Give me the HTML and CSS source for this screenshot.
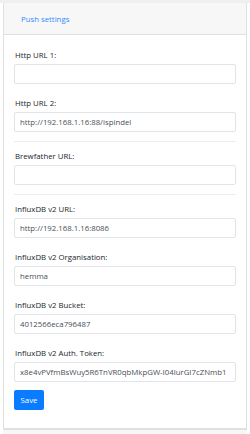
FILE: index.html
```
<!DOCTYPE html>
<html lang="en">
    <head>
        <link rel="stylesheet" href="styles.css">
        <meta charset="UTF-8">
        <title>Push settings</title>
    </head>
    <body>
        <div class="topbar"></div>
        <div class="card">
            <div class="card-header">
                <a class="tab" href="#">Push settings</a>
            </div>
            <form class="card-body">
                <div class="group">
                    <label for="http1">Http URL 1:</label>
                    <input type="text" id="http1" value="">
                </div>
                <div class="group">
                    <label for="http2">Http URL 2:</label>
                    <input type="text" id="http2" value="http://192.168.1.16:88/ispindel">
                </div>
                <hr>
                <div class="group">
                    <label for="brewfather">Brewfather URL:</label>
                    <input type="text" id="brewfather" value="">
                </div>
                <hr>
                <div class="group">
                    <label for="influx-url">InfluxDB v2 URL:</label>
                    <input type="text" id="influx-url" value="http://192.168.1.16:8086">
                </div>
                <div class="group">
                    <label for="influx-org">InfluxDB v2 Organisation:</label>
                    <input type="text" id="influx-org" value="hemma">
                </div>
                <div class="group">
                    <label for="influx-bucket">InfluxDB v2 Bucket:</label>
                    <input type="text" id="influx-bucket" value="4012566eca796487">
                </div>
                <div class="group last">
                    <label for="influx-token">InfluxDB v2 Auth. Token:</label>
                    <input type="text" id="influx-token" value="x8e4vPVfmBsWuy5R6TnVR0qbMkpGW-I04lurGI7cZNmb1">
                </div>
                <button type="submit" class="btn">Save</button>
            </form>
        </div>
        <div class="card-next"></div>
    </body>
</html>
```
FILE: styles.css
```
body {
    margin: 0;
    background: #fff;
    font-family: "Open Sans", "Noto Sans", sans-serif;
    font-size: 7.8px;
    color: #212529;
}
.topbar {
    height: 3px;
    background: #efefef;
}
.card {
    margin: 0 3px;
    border: 1px solid #e0e0e0;
    border-top: none;
}
.card-header {
    height: 31px;
    display: flex;
    align-items: center;
    background: #f7f7f7;
    border-bottom: 1px solid #e0e0e0;
}
.tab {
    margin-left: 17px;
    color: #2f8cff;
    text-decoration: none;
}
.card-body {
    display: flex;
    flex-direction: column;
    padding: 14px 10px 18px 10px;
}
.group {
    display: flex;
    flex-direction: column;
    margin-bottom: 13px;
}
.group.last {
    margin-bottom: 8px;
}
label {
    line-height: 12px;
    margin-bottom: 3px;
    padding-left: 1px;
}
input {
    box-sizing: border-box;
    height: 20px;
    margin: 0;
    padding: 0 5px;
    border: 1px solid #e2e4e7;
    border-radius: 2px;
    font-family: inherit;
    font-size: 7.8px;
    color: #495057;
    background: #fff;
}
hr {
    margin: -4px 0 8px 0;
    border: none;
    border-top: 1px solid #ececec;
}
.btn {
    align-self: flex-start;
    width: 30px;
    height: 20px;
    padding: 0;
    border: none;
    border-radius: 2px;
    background: #0a7cff;
    color: #fff;
    font-family: inherit;
    font-size: 7.8px;
}
.card-next {
    height: 10px;
    margin: 0 3px;
    background: #f7f7f7;
    border-top: 1px solid #e0e0e0;
}
```
